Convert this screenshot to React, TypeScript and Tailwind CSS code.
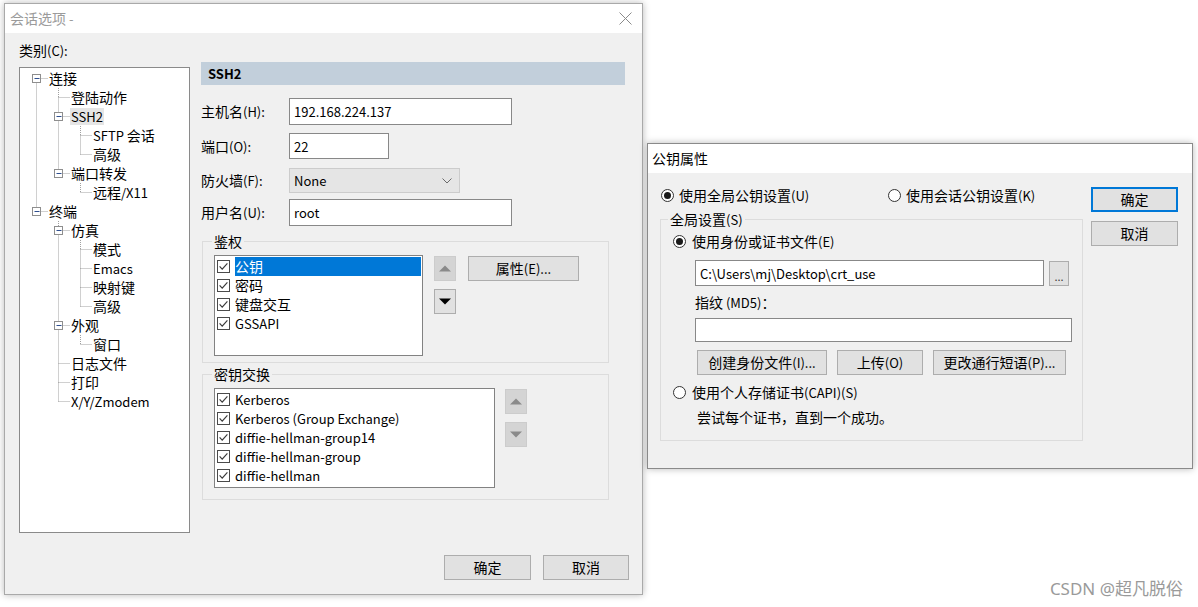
import React from "react";

const font = "font-['Noto_Sans_CJK_SC',sans-serif]";

const CJK = /([\u2E80-\u9FFF\uF900-\uFAFF\uFE30-\uFE4F\uFF00-\uFFEF]+)/;

function T({ s }: { s: string }) {
  const parts = s.split(CJK).filter((p) => p !== "");
  return (
    <>
      {parts.map((p, i) =>
        CJK.test(p) ? (
          <span key={i} className="text-[14px]">
            {p}
          </span>
        ) : (
          <span key={i} className="text-[13px]">
            {p}
          </span>
        )
      )}
    </>
  );
}

type Node = { t: string; l: number; box?: boolean; sel?: boolean };

const tree: Node[] = [
  { t: "连接", l: 0, box: true },
  { t: "登陆动作", l: 1 },
  { t: "SSH2", l: 1, box: true, sel: true },
  { t: "SFTP 会话", l: 2 },
  { t: "高级", l: 2 },
  { t: "端口转发", l: 1, box: true },
  { t: "远程/X11", l: 2 },
  { t: "终端", l: 0, box: true },
  { t: "仿真", l: 1, box: true },
  { t: "模式", l: 2 },
  { t: "Emacs", l: 2 },
  { t: "映射键", l: 2 },
  { t: "高级", l: 2 },
  { t: "外观", l: 1, box: true },
  { t: "窗口", l: 2 },
  { t: "日志文件", l: 1 },
  { t: "打印", l: 1 },
  { t: "X/Y/Zmodem", l: 1 },
];

const padByLevel = ["pl-[29px]", "pl-[51px]", "pl-[73px]"];

const col = (l: number) => 16.5 + 22 * l;
const cy = (i: number) => 10.5 + 19 * i;
const rowTop = (i: number) => 1 + 19 * i;

function TreeLines() {
  const segs: React.ReactNode[] = [];
  tree.forEach((n, i) => {
    const x = col(n.l);
    segs.push(
      <line key={"h" + i} x1={x} y1={cy(i)} x2={x + 11} y2={cy(i)} stroke="#a0a0a0" strokeDasharray="1 1" />
    );
    let j = i - 1;
    while (j >= 0 && tree[j].l > n.l) j--;
    if (j >= 0) {
      const from = tree[j].l === n.l ? cy(j) : rowTop(i);
      if (tree[j].l === n.l || tree[j].l === n.l - 1) {
        segs.push(
          <line key={"v" + i} x1={x} y1={from} x2={x} y2={cy(i)} stroke="#a0a0a0" strokeDasharray="1 1" />
        );
      }
    }
  });
  const boxes = tree.map((n, i) =>
    n.box ? (
      <g key={"b" + i}>
        <rect x={col(n.l) - 4} y={cy(i) - 4} width={8} height={8} fill="#ffffff" stroke="#8e8e8e" />
        <line x1={col(n.l) - 2} y1={cy(i)} x2={col(n.l) + 3} y2={cy(i)} stroke="#2f4f8f" />
      </g>
    ) : null
  );
  return (
    <svg className="absolute left-0 top-0" width="169" height="464">
      {segs}
      {boxes}
    </svg>
  );
}

function Check() {
  return (
    <span className="inline-flex w-[13px] h-[13px] border border-[#4a4a4a] bg-white shrink-0 items-center justify-center">
      <svg width="11" height="11" viewBox="0 0 11 11">
        <path d="M1.6 5.4 L4.2 8.2 L9.4 2.4" fill="none" stroke="#3a3a3a" strokeWidth="1.2" />
      </svg>
    </span>
  );
}

function Radio({ checked }: { checked?: boolean }) {
  return (
    <span className="w-[13px] h-[13px] rounded-full border border-[#333333] bg-white inline-flex items-center justify-center shrink-0">
      {checked && <span className="w-[7px] h-[7px] rounded-full bg-[#1a1a1a]" />}
    </span>
  );
}

function Btn({ children, className }: { children: React.ReactNode; className: string }) {
  return (
    <div className={`h-[25px] bg-[#e1e1e1] border border-[#adadad] flex items-center justify-center leading-[19px] ${className}`}>
      {children}
    </div>
  );
}

function ArrowBtn({ up, enabled, className }: { up?: boolean; enabled?: boolean; className: string }) {
  return (
    <div
      className={
        enabled
          ? `w-[22px] h-[25px] bg-[#e1e1e1] border border-[#adadad] flex items-center justify-center ${className}`
          : `w-[22px] h-[25px] bg-[#d4d4d4] border border-[#cccccc] flex items-center justify-center ${className}`
      }
    >
      <svg width="12" height="7" viewBox="0 0 12 7">
        <path d={up ? "M0 6.5 L6 0.5 L12 6.5Z" : "M0 0.5 L6 6.5 L12 0.5Z"} fill={enabled ? "#000000" : "#8a8a8a"} />
      </svg>
    </div>
  );
}

function ListRow({ text, sel }: { text: string; sel?: boolean }) {
  return (
    <div className="h-[19px] flex items-center pl-[2px] pr-[1px]">
      <Check />
      <span
        className={
          sel
            ? "ml-[5px] flex-1 h-[19px] leading-[19px] bg-[#0078d7] text-white"
            : "ml-[5px] flex-1 h-[19px] leading-[19px]"
        }
      >
        <T s={text} />
      </span>
    </div>
  );
}

function Window1() {
  return (
    <div className="mt-[3px] ml-[4px] w-[639px] h-[592px] shrink-0 border border-[#a9a9a9] bg-[#f0f0f0] shadow-[0_0_7px_rgba(0,0,0,0.28)] flex flex-col leading-[19px]">
      <div className="h-[29px] bg-white flex items-center justify-between pl-[5px] pr-[10px] text-[#9b9b9b]">
        <span>
          <T s="会话选项 -" />
        </span>
        <svg width="13" height="13" viewBox="0 0 13 13">
          <path d="M0.5 0.5 L12.5 12.5 M12.5 0.5 L0.5 12.5" stroke="#8a8a8a" strokeWidth="1" />
        </svg>
      </div>
      <div className="flex-1 flex flex-col">
        <div className="flex">
          <div className="ml-[14px] w-[171px] flex flex-col">
            <div className="mt-[8px] h-[19px]">
              <T s="类别(C):" />
            </div>
            <div className="mt-[7px] h-[466px] border border-[#8a8a8a] bg-white relative pt-[1px]">
              <TreeLines />
              <div className="relative">
                {tree.map((n, i) => (
                  <div key={i} className={`h-[19px] leading-[19px] ${padByLevel[n.l]}`}>
                    {n.sel ? (
                      <span className="inline-block bg-[#e5e5e5] leading-[16px] px-[1px] -ml-[1px]">
                        <T s={n.t} />
                      </span>
                    ) : (
                      <T s={n.t} />
                    )}
                  </div>
                ))}
              </div>
            </div>
          </div>
          <div className="ml-[11px] w-[424px] flex flex-col">
            <div className="mt-[29px] h-[23px] bg-[#c2cfdb] flex items-center pl-[7px] font-bold">
              <T s="SSH2" />
            </div>
            <div className="mt-[13px] flex items-center">
              <div className="w-[88px]">
                <T s="主机名(H):" />
              </div>
              <div className="w-[223px] h-[27px] border border-[#888888] bg-white flex items-center pl-[4px]">
                <T s="192.168.224.137" />
              </div>
            </div>
            <div className="mt-[8px] flex items-center">
              <div className="w-[88px]">
                <T s="端口(O):" />
              </div>
              <div className="w-[100px] h-[26px] border border-[#888888] bg-white flex items-center pl-[4px]">
                <T s="22" />
              </div>
            </div>
            <div className="mt-[9px] flex items-center">
              <div className="w-[88px]">
                <T s="防火墙(F):" />
              </div>
              <div className="w-[171px] h-[25px] border border-[#cccccc] bg-[#e5e5e5] flex items-center justify-between pl-[4px] pr-[7px]">
                <span>
                  <T s="None" />
                </span>
                <svg width="10" height="6" viewBox="0 0 10 6">
                  <path d="M0.5 0.5 L5 5 L9.5 0.5" fill="none" stroke="#6a6a6a" strokeWidth="1" />
                </svg>
              </div>
            </div>
            <div className="mt-[6px] flex items-center">
              <div className="w-[88px]">
                <T s="用户名(U):" />
              </div>
              <div className="w-[223px] h-[27px] border border-[#888888] bg-white flex items-center pl-[4px]">
                <T s="root" />
              </div>
            </div>

            <fieldset className="mt-[6px] ml-[1px] w-[407px] min-w-0 border border-[#dcdcdc] pl-[11px] pb-[6px]">
              <legend className="ml-[-2px] px-[2px] leading-[19px]">
                <T s="鉴权" />
              </legend>
              <div className="mt-[4px] flex items-start">
                <div className="w-[209px] h-[101px] border border-[#828282] bg-white pt-[1px]">
                  <ListRow text="公钥" sel />
                  <ListRow text="密码" />
                  <ListRow text="键盘交互" />
                  <ListRow text="GSSAPI" />
                </div>
                <div className="ml-[11px] flex flex-col">
                  <ArrowBtn up className="mt-[1px]" />
                  <ArrowBtn enabled className="mt-[8px]" />
                </div>
                <Btn className="ml-[12px] mt-[1px] w-[111px] h-[24px]">
                  <T s="属性(E)..." />
                </Btn>
              </div>
            </fieldset>

            <fieldset className="mt-[2px] ml-[1px] w-[407px] min-w-0 border border-[#dcdcdc] pl-[11px] pb-[11px]">
              <legend className="ml-[-2px] px-[2px] leading-[19px]">
                <T s="密钥交换" />
              </legend>
              <div className="mt-[4px] flex items-start">
                <div className="w-[281px] h-[100px] border border-[#828282] bg-white pt-[1px]">
                  <ListRow text="Kerberos" />
                  <ListRow text="Kerberos (Group Exchange)" />
                  <ListRow text="diffie-hellman-group14" />
                  <ListRow text="diffie-hellman-group" />
                  <ListRow text="diffie-hellman" />
                </div>
                <div className="ml-[10px] flex flex-col">
                  <ArrowBtn up className="mt-[1px]" />
                  <ArrowBtn className="mt-[8px]" />
                </div>
              </div>
            </fieldset>
          </div>
        </div>
        <div className="mt-[22px] flex justify-end gap-[12px] pr-[13px]">
          <Btn className="w-[87px]">
            <T s="确定" />
          </Btn>
          <Btn className="w-[86px]">
            <T s="取消" />
          </Btn>
        </div>
      </div>
    </div>
  );
}

function Window2() {
  return (
    <div className="mt-[143px] ml-[4px] w-[546px] h-[326px] shrink-0 border border-[#8a8a8a] bg-[#f0f0f0] shadow-[0_0_7px_rgba(0,0,0,0.28)] flex flex-col leading-[19px]">
      <div className="h-[29px] bg-white flex items-center pl-[4px]">
        <T s="公钥属性" />
      </div>
      <div className="flex-1 flex">
        <div className="flex-1 pl-[12px] flex flex-col">
          <div className="mt-[13px] h-[19px] flex items-center">
            <div className="ml-[1px] w-[227px] flex items-center">
              <Radio checked />
              <span className="ml-[5px]">
                <T s="使用全局公钥设置(U)" />
              </span>
            </div>
            <div className="flex items-center">
              <Radio />
              <span className="ml-[5px]">
                <T s="使用会话公钥设置(K)" />
              </span>
            </div>
          </div>
          <fieldset className="mt-[5px] w-[423px] min-w-0 border border-[#dcdcdc] pb-[13px]">
            <legend className="ml-[7px] px-[2px] leading-[19px]">
              <T s="全局设置(S)" />
            </legend>
            <div className="mt-[3px] pl-[12px] h-[19px] flex items-center">
              <Radio checked />
              <span className="ml-[6px]">
                <T s="使用身份或证书文件(E)" />
              </span>
            </div>
            <div className="mt-[9px] pl-[34px] flex items-start">
              <div className="w-[349px] h-[26px] border border-[#888888] bg-white flex items-center pl-[4px]">
                <T s="C:\Users\mj\Desktop\crt_use" />
              </div>
              <Btn className="ml-[5px] mt-[1px] w-[20px]">
                <span className="text-[11px] text-[#3a3a3a] leading-[10px] pt-[4px]">...</span>
              </Btn>
            </div>
            <div className="mt-[7px] pl-[34px] h-[19px]">
              <T s="指纹 (MD5)：" />
            </div>
            <div className="mt-[6px] pl-[34px]">
              <div className="w-[377px] h-[24px] border border-[#888888] bg-white" />
            </div>
            <div className="mt-[8px] pl-[36px] flex">
              <Btn className="w-[130px]">
                <T s="创建身份文件(I)..." />
              </Btn>
              <Btn className="ml-[10px] w-[86px]">
                <T s="上传(O)" />
              </Btn>
              <Btn className="ml-[10px] w-[133px]">
                <T s="更改通行短语(P)..." />
              </Btn>
            </div>
            <div className="mt-[8px] pl-[12px] h-[19px] flex items-center">
              <Radio />
              <span className="ml-[6px]">
                <T s="使用个人存储证书(CAPI)(S)" />
              </span>
            </div>
            <div className="mt-[6px] pl-[36px] h-[19px]">
              <T s="尝试每个证书，直到一个成功。" />
            </div>
          </fieldset>
        </div>
        <div className="mt-[14px] mr-[14px] flex flex-col">
          <div className="w-[87px] h-[25px] bg-[#e1e1e1] border-2 border-[#0078d7] flex items-center justify-center">
            <T s="确定" />
          </div>
          <Btn className="mt-[9px] w-[87px]">
            <T s="取消" />
          </Btn>
        </div>
      </div>
    </div>
  );
}

export default function App() {
  return (
    <div className={`${font} relative w-[1198px] h-[607px] bg-white overflow-hidden flex items-start text-black text-[14px]`}>
      <Window1 />
      <Window2 />
      <div className="absolute right-[15px] bottom-[8px] text-[17px] leading-[20px] text-[#9a9a9a] font-['Noto_Sans','Noto_Sans_CJK_SC',sans-serif]">
        CSDN @超凡脱俗
      </div>
    </div>
  );
}
